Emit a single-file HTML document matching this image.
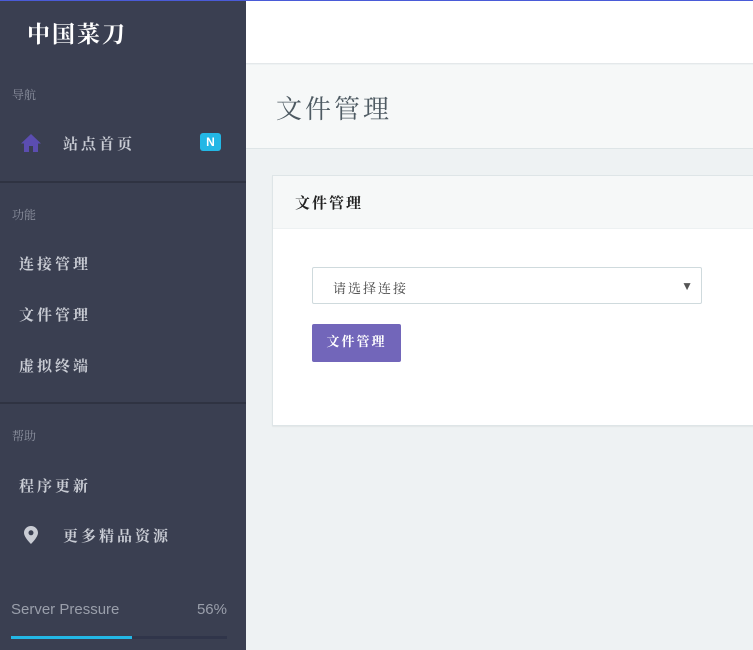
<!DOCTYPE html>
<html><head><meta charset="utf-8"><style>
*{margin:0;padding:0;box-sizing:border-box}
body{width:753px;height:650px;overflow:hidden;background:#eef2f3;font-family:"Liberation Sans","Noto Serif CJK SC","Noto Sans CJK SC",sans-serif;position:relative}
.sb{position:absolute;left:0;top:0;width:246px;height:650px;background:#3a3f51;color:#c0c3cc}
.topline{position:absolute;left:0;top:0;width:753px;height:1px;background:#4a5bd8;z-index:5}
.logo{position:absolute;left:27px;top:16px;font-size:23px;font-weight:bold;color:#fff;letter-spacing:2px}
.cap{position:absolute;left:12px;font-size:12px;color:#8d92a0}
.it{position:absolute;left:19px;font-size:15px;font-weight:bold;color:#c9ccd4;letter-spacing:3px}
.sep{position:absolute;left:0;width:246px;height:2px;background:#2f3342}
.badge{position:absolute;left:200px;top:133px;width:21px;height:18px;background:#23b7e5;border-radius:3px;color:#fff;font-size:12px;font-weight:bold;text-align:center;line-height:18px}
.hdr{position:absolute;left:246px;top:1px;right:0;height:63px;background:#fff;border-bottom:1px solid #e4e8ea}
.tb{position:absolute;left:246px;top:65px;right:0;height:84px;background:#f6f8f8;border-bottom:1px solid #dee5e7}
.tb h1{position:absolute;left:30px;top:24px;font-size:26px;font-weight:normal;color:#4e5a62;letter-spacing:3px}
.card{position:absolute;left:272px;top:175px;width:490px;height:251px;background:#fff;border:1px solid #dee5e7;box-shadow:0 1px 1px rgba(0,0,0,.05)}
.ch{height:53px;background:#f6f8f8;border-bottom:1px solid #edf1f2;padding:16px 0 0 22px;font-size:15px;font-weight:bold;color:#222;letter-spacing:2px}
.sel{position:absolute;left:39px;top:91px;width:390px;height:37px;border:1px solid #cfdadd;border-radius:2px;font-size:13px;color:#444;padding:10px 0 0 20px;letter-spacing:2px}
.sel span{position:absolute;right:6px;top:11px;font-size:12px;color:#555}
.btn{position:absolute;left:39px;top:148px;width:89px;height:38px;background:#7266ba;border-radius:2px;color:#fff;font-size:13px;text-align:center;line-height:36px;letter-spacing:2px;font-weight:bold}
</style></head><body>
<div class="topline"></div>
<div class="sb">
<div class="logo">中国菜刀</div>
<div class="cap" style="top:86px">导航</div>
<svg style="position:absolute;left:21px;top:134px" width="20" height="18" viewBox="0 0 20 18"><path d="M10 0L0 9.5h3V18h5v-6h4v6h5V9.5h3z" fill="#5b4db0"/></svg>
<div class="it" style="left:63px;top:133px">站点首页</div>
<div class="badge">N</div>
<div class="sep" style="top:181px"></div>
<div class="cap" style="top:206px">功能</div>
<div class="it" style="top:253px">连接管理</div>
<div class="it" style="top:304px">文件管理</div>
<div class="it" style="top:355px">虚拟终端</div>
<div class="sep" style="top:402px"></div>
<div class="cap" style="top:427px">帮助</div>
<div class="it" style="top:475px">程序更新</div>
<svg style="position:absolute;left:24px;top:526px" width="14" height="18" viewBox="0 0 14 18"><path d="M7 0C3.1 0 0 3 0 6.8 0 11.5 7 18 7 18s7-6.5 7-11.2C14 3 10.9 0 7 0zm0 9.3a2.5 2.5 0 110-5 2.5 2.5 0 010 5z" fill="#c9ccd4"/></svg>
<div class="it" style="left:63px;top:525px">更多精品资源</div>
<div style="position:absolute;left:11px;top:601px;font-size:15px;color:#9a9fab">Server Pressure</div>
<div style="position:absolute;right:19px;top:601px;font-size:15px;color:#9a9fab">56%</div>
<div style="position:absolute;left:11px;top:636px;width:216px;height:3px;background:#30354a"></div>
<div style="position:absolute;left:11px;top:636px;width:121px;height:3px;background:#23b7e5"></div>
</div>
<div class="hdr"></div>
<div class="tb"><h1>文件管理</h1></div>
<div class="card">
<div class="ch">文件管理</div>
<div class="sel">请选择连接<span>▼</span></div>
<div class="btn">文件管理</div>
</div>
</body></html>
